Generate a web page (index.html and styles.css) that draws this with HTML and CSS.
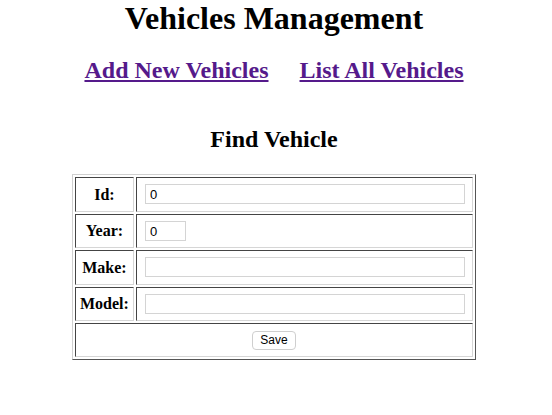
FILE: index.html
```html
<!DOCTYPE html>
<html>
<head>
<meta charset="utf-8">
<title>Vehicles Management</title>
<link rel="stylesheet" href="styles.css">
</head>
<body>
<h1 class="title">Vehicles Management</h1>
<nav class="nav">
  <a class="nav-link" href="#">Add New Vehicles</a>
  <a class="nav-link" href="#">List All Vehicles</a>
</nav>
<h2 class="subtitle">Find Vehicle</h2>
<form class="form">
  <table class="grid">
    <tr>
      <th class="label">Id:</th>
      <td class="field field-tall"><input class="input wide" type="text" value="0"></td>
    </tr>
    <tr>
      <th class="label">Year:</th>
      <td class="field"><input class="input short" type="text" value="0"></td>
    </tr>
    <tr>
      <th class="label">Make:</th>
      <td class="field field-tall"><input class="input wide" type="text" value=""></td>
    </tr>
    <tr>
      <th class="label">Model:</th>
      <td class="field"><input class="input wide" type="text" value=""></td>
    </tr>
    <tr>
      <td class="actions" colspan="2"><button class="btn" type="button">Save</button></td>
    </tr>
  </table>
</form>
</body>
</html>
```

FILE: styles.css
```css
html, body {
  background: #fff;
}
body {
  margin: 0 12px 8px 8px;
  font-family: "Liberation Serif", "Times New Roman", serif;
  color: #000;
}
.title {
  margin: 0;
  font-size: 32px;
  font-weight: bold;
  text-align: center;
  line-height: 37px;
}
.nav {
  display: flex;
  justify-content: center;
  gap: 31px;
  margin-top: 19px;
  font-size: 24px;
  font-weight: bold;
  line-height: 28px;
}
.nav-link {
  color: #551a8b;
  text-decoration: underline;
}
.subtitle {
  margin: 41px 0 0;
  font-size: 24px;
  font-weight: bold;
  text-align: center;
  line-height: 28px;
}
.form {
  margin-top: 21px;
}
.grid {
  width: 404px;
  margin: 0 auto;
  border-collapse: separate;
  border-spacing: 2px;
  border: 1px solid;
  border-color: #d0d0d0 #555 #555 #d0d0d0;
}
.grid th, .grid td {
  border: 1px solid;
  border-color: #444 #d6d6d6 #d6d6d6 #444;
}
.label {
  padding: 6px 4px;
  font-size: 16px;
  font-weight: bold;
  text-align: center;
  white-space: nowrap;
  width: 1px;
}
.field {
  padding: 6px 7px 6px 8px;
  line-height: 0;
}
.field-tall {
  padding-bottom: 7px;
}
.input {
  box-sizing: border-box;
  height: 20px;
  margin: 0;
  padding: 0 4px;
  border: 1px solid #d4d4d4;
  border-radius: 0;
  font-family: "Liberation Sans", Arial, sans-serif;
  font-size: 13px;
  color: #000;
  background: #fff;
  outline: none;
}
.wide {
  width: 100%;
}
.short {
  width: 41px;
}
.actions {
  padding: 7px 5px 6px;
  text-align: center;
  line-height: 0;
}
.btn {
  box-sizing: border-box;
  height: 19px;
  padding: 0 7px;
  border: 1px solid #cfcfcf;
  border-radius: 4px;
  background: #fff;
  font-family: "Liberation Sans", Arial, sans-serif;
  font-size: 12px;
  color: #000;
  line-height: 17px;
}
```
